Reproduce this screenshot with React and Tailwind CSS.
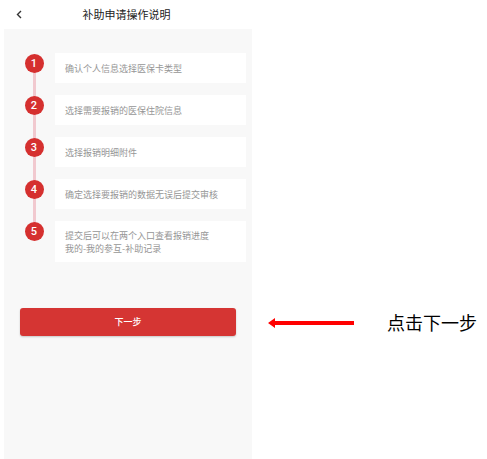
import React from 'react';

const steps = [
  ['确认个人信息选择医保卡类型'],
  ['选择需要报销的医保住院信息'],
  ['选择报销明细附件'],
  ['确定选择要报销的数据无误后提交审核'],
  ['提交后可以在两个入口查看报销进度', '我的-我的参互-补助记录'],
];

const font = { fontFamily: '"Noto Sans CJK SC", "Noto Sans", sans-serif' };

export default function App() {
  return (
    <div className="w-[487px] h-[459px] bg-white flex overflow-hidden" style={font}>
      {/* phone screen */}
      <div className="w-[252px] h-full flex flex-col">
        <div className="h-[29px] flex items-center relative">
          <svg className="absolute left-[16px] top-[10px]" width="7" height="9" viewBox="0 0 7 9">
            <path d="M5 1 L1.5 4.5 L5 8" fill="none" stroke="#333" strokeWidth="1.4" />
          </svg>
          <div className="w-full text-center text-[11px] text-[#222] pl-[1px] leading-none">补助申请操作说明</div>
        </div>
        <div className="flex-1 ml-[4px] bg-[#f8f8f8] pt-[24px]">
          <div className="relative">
            <div className="absolute left-[28.5px] top-[10px] h-[170px] w-[3px] bg-[#f1c9cf]" />
            <div className="flex flex-col gap-[12px]">
              {steps.map((lines, i) => (
                <div key={i} className="flex items-start relative">
                  <div className="w-[51px] flex justify-center pl-[9px]">
                    <div
                      className="w-[19px] h-[19px] rounded-full bg-[#d5302f] text-white text-[11px] font-medium flex items-center justify-center leading-none mt-[0.5px]"
                      style={{ fontFamily: 'Roboto, sans-serif' }}
                    >
                      {i + 1}
                    </div>
                  </div>
                  <div
                    className={`w-[191px] bg-white pl-[10px] flex flex-col justify-center text-[9px] text-[#969696] leading-[13px] ${
                      lines.length > 1 ? 'h-[41px]' : 'h-[30px]'
                    }`}
                  >
                    {lines.map((l, j) => (
                      <div key={j}>{l}</div>
                    ))}
                  </div>
                </div>
              ))}
            </div>
          </div>
          <div className="mt-[46px] pl-[16px]">
            <button className="w-[216px] h-[28px] rounded-[3px] bg-[#d53533] text-white text-[9px] font-medium shadow-[0_1px_2px_rgba(0,0,0,0.2)] flex items-center justify-center">
              下一步
            </button>
          </div>
        </div>
      </div>
      {/* annotation */}
      <div className="flex-1 flex items-start pt-[313px]">
        <svg className="ml-[16px] mt-[4px]" width="88" height="12" viewBox="0 0 88 12">
          <path d="M0 6 L7 1 L7 4 L86 4 L86 8 L7 8 L7 11 Z" fill="#f00" />
        </svg>
        <div className="ml-[31px] text-[18px] text-black leading-none">
          点击下一步
        </div>
      </div>
    </div>
  );
}
